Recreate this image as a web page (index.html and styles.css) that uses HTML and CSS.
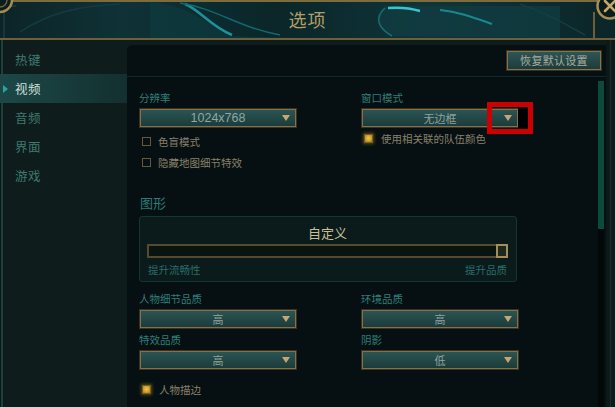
FILE: index.html
```html
<!DOCTYPE html>
<html lang="zh-CN">
<head>
<meta charset="utf-8">
<title>选项</title>
<link rel="stylesheet" href="styles.css">
</head>
<body>
<div class="window">
  <header class="titlebar">
    <svg class="swirl" viewBox="0 0 615 36" preserveAspectRatio="none" aria-hidden="true">
      <defs>
        <linearGradient id="bg" x1="0" y1="0" x2="1" y2="0">
          <stop offset="0" stop-color="#0c2427"/>
          <stop offset="0.2" stop-color="#0f3236"/>
          <stop offset="0.45" stop-color="#0a2629"/>
          <stop offset="0.7" stop-color="#0f3539"/>
          <stop offset="1" stop-color="#0b2528"/>
        </linearGradient>
      </defs>
      <rect width="615" height="36" fill="url(#bg)"/>
      <path d="M150 0 C 190 4 205 20 230 34 L 300 36 L 150 36 Z" fill="#0e3a3f" opacity="0.7"/>
      <path d="M385 4 C 372 14 378 26 392 34 L 560 36 L 560 4 Z" fill="#103c41" opacity="0.8"/>
      <path d="M185 2 C 200 8 210 24 232 33" stroke="#1fa3ab" stroke-width="2.5" fill="none" opacity="0.85"/>
      <path d="M180 1 C 215 6 240 26 280 33" stroke="#13676d" stroke-width="1.5" fill="none"/>
      <path d="M388 6 C 400 5 410 6 420 9" stroke="#37c6cf" stroke-width="2.5" fill="none"/>
      <path d="M440 8 C 460 10 475 16 492 22" stroke="#1e9aa2" stroke-width="2" fill="none" opacity="0.8"/>
      <path d="M385 6 C 374 16 378 26 392 34" stroke="#1a6c72" stroke-width="1.5" fill="none"/>
      <path d="M20 30 C 50 10 80 4 120 2" stroke="#143c40" stroke-width="1.5" fill="none"/>
      <path d="M520 2 C 545 10 565 22 585 33" stroke="#143e42" stroke-width="1.5" fill="none"/>
      <path d="M4 36 L 4 12 C 6 6 10 4 16 4" stroke="#1d4b4c" stroke-width="1" fill="none"/>
      <path d="M594 10 L 594 36" stroke="#6e5f36" stroke-width="2" fill="none"/>
    </svg>
    <svg class="corner-left" viewBox="0 0 20 20" aria-hidden="true">
      <circle cx="2" cy="2" r="12" fill="#0b1d1e" stroke="#a58d52" stroke-width="2.5"/>
      <circle cx="2" cy="2" r="7" fill="none" stroke="#6f5e35" stroke-width="1.5"/>
    </svg>
    <svg class="close" viewBox="0 0 30 30" aria-hidden="true">
      <circle cx="15" cy="11" r="12.5" fill="#0b1a1b" stroke="#a68e54" stroke-width="2.5"/>
      <path d="M10 6 L 20 16 M20 6 L 10 16" stroke="#c3a869" stroke-width="2.6" stroke-linecap="round"/>
    </svg>
    <h1 class="title">选项</h1>
  </header>

  <div class="main">
    <nav class="sidebar">
      <div class="nav-item">热键</div>
      <div class="nav-item active">视频</div>
      <div class="nav-item">音频</div>
      <div class="nav-item">界面</div>
      <div class="nav-item">游戏</div>
    </nav>

    <section class="panel">
      <div class="panel-top">
        <button class="btn">恢复默认设置</button>
      </div>
      <div class="scroll">
        <div class="content">
          <div class="grid">
            <div class="col">
              <div class="label">分辨率</div>
              <div class="select"><span></span><span class="value latin">1024x768</span><svg class="arrow" viewBox="0 0 8 6"><polygon points="0,0 8,0 4,6"/></svg></div>
              <div class="check"><span class="box"></span><span>色盲模式</span></div>
              <div class="check"><span class="box"></span><span>隐藏地图细节特效</span></div>
            </div>
            <div class="col">
              <div class="label">窗口模式</div>
              <div class="select-wrap">
                <div class="select"><span></span><span class="value">无边框</span><svg class="arrow" viewBox="0 0 8 6"><polygon points="0,0 8,0 4,6"/></svg></div>
                <div class="highlight"></div>
              </div>
              <div class="check"><span class="box on"></span><span>使用相关联的队伍颜色</span></div>
            </div>
          </div>

          <h2 class="section-title">图形</h2>
          <div class="gfx">
            <div class="gfx-name">自定义</div>
            <div class="track"><div class="knob"></div></div>
            <div class="gfx-ends"><span>提升流畅性</span><span>提升品质</span></div>
          </div>

          <div class="grid grid-quality">
            <div class="field">
              <div class="label">人物细节品质</div>
              <div class="select"><span></span><span class="value">高</span><svg class="arrow" viewBox="0 0 8 6"><polygon points="0,0 8,0 4,6"/></svg></div>
            </div>
            <div class="field">
              <div class="label">环境品质</div>
              <div class="select"><span></span><span class="value">高</span><svg class="arrow" viewBox="0 0 8 6"><polygon points="0,0 8,0 4,6"/></svg></div>
            </div>
            <div class="field">
              <div class="label">特效品质</div>
              <div class="select"><span></span><span class="value">高</span><svg class="arrow" viewBox="0 0 8 6"><polygon points="0,0 8,0 4,6"/></svg></div>
            </div>
            <div class="field">
              <div class="label">阴影</div>
              <div class="select"><span></span><span class="value">低</span><svg class="arrow" viewBox="0 0 8 6"><polygon points="0,0 8,0 4,6"/></svg></div>
            </div>
          </div>

          <div class="check check-last"><span class="box on"></span><span>人物描边</span></div>
        </div>
        <div class="scrollbar"><div class="thumb"></div></div>
      </div>
    </section>

    <div class="frame-right"></div>
  </div>
</div>
</body>
</html>
```

FILE: styles.css
```css
* { box-sizing: border-box; }

html, body {
  margin: 0;
  padding: 0;
  background: #0f1c1c;
}

body {
  font-family: "Noto Sans CJK SC", "Noto Sans", sans-serif;
  width: 615px;
  height: 407px;
  overflow: hidden;
}

.window {
  width: 615px;
  height: 407px;
  display: flex;
  flex-direction: column;
}

/* ---------- title bar ---------- */
.titlebar {
  position: relative;
  height: 40px;
  flex: none;
  border-top: 2px solid #7f6c3e;
  border-bottom: 2px solid #6f6037;
  background: #0c2427;
  display: flex;
  align-items: center;
  justify-content: center;
}

.swirl {
  position: absolute;
  left: 0;
  top: 0;
  width: 615px;
  height: 36px;
}

.corner-left {
  position: absolute;
  left: -2px;
  top: -4px;
  width: 20px;
  height: 20px;
}

.close {
  position: absolute;
  left: 595px;
  top: -7px;
  width: 30px;
  height: 30px;
}

.title {
  position: relative;
  margin: 0 0 2px 0;
  font-size: 18px;
  font-weight: normal;
  line-height: 22px;
  letter-spacing: 1px;
  color: #b39d63;
}

/* ---------- main ---------- */
.main {
  flex: 1;
  display: flex;
  min-height: 0;
}

.sidebar {
  width: 127px;
  flex: none;
  padding-top: 5px;
  background: linear-gradient(90deg, #0b1616 0, #0b1616 1px, #1c403c 1px, #1c403c 3px, #0f1c1c 3px);
}

.nav-item {
  position: relative;
  height: 29px;
  line-height: 29px;
  padding-left: 15px;
  font-size: 12.5px;
  letter-spacing: 0.5px;
  color: #3d7a71;
}

.nav-item.active {
  color: #cfe0da;
  background: linear-gradient(90deg, #1d4747 0%, #173b3a 55%, #12302f 100%);
}

.nav-item.active::before {
  content: "";
  position: absolute;
  left: 3px;
  top: 11px;
  border-left: 5px solid #2aa39d;
  border-top: 4px solid transparent;
  border-bottom: 4px solid transparent;
}

/* ---------- panel ---------- */
.panel {
  width: 479px;
  flex: none;
  margin-top: 5px;
  background: #061012;
  border-top-left-radius: 5px;
  display: flex;
  flex-direction: column;
  min-height: 0;
}

.panel-top {
  height: 32px;
  flex: none;
  display: flex;
  justify-content: flex-end;
  align-items: flex-start;
  padding: 5px 4px 0 0;
  border-bottom: 1px solid #0f2a29;
}

.btn {
  width: 96px;
  height: 21px;
  padding: 0;
  border: 1px solid #3b3120;
  box-shadow: inset 0 0 0 1px #85724b;
  background: linear-gradient(#2e5755, #1c3a39);
  color: #aaad9f;
  font-family: "Noto Sans CJK SC", sans-serif;
  font-size: 11px;
  line-height: 19px;
  letter-spacing: 0.3px;
}

.scroll {
  flex: 1;
  display: flex;
  min-height: 0;
}

.content {
  flex: 1;
  padding: 14px 0 0 12px;
}

.scrollbar {
  width: 6px;
  flex: none;
  margin: 4px 2px 0 0;
  background: #020707;
}

.thumb {
  height: 148px;
  background: #0c4a3c;
}

.frame-right {
  flex: 1;
  background: linear-gradient(90deg, #0c1818 0, #0e1b1b 4px, #1b302e 4px, #1b302e 5px, #0e1b1b 5px);
}

/* ---------- form ---------- */
.grid {
  display: grid;
  grid-template-columns: 158px 158px;
  column-gap: 64px;
}

.label {
  height: 14px;
  line-height: 14px;
  margin-bottom: 3px;
  font-size: 10.5px;
  color: #2e7f7a;
  white-space: nowrap;
}

.select-wrap {
  position: relative;
}

.select {
  height: 20px;
  display: grid;
  grid-template-columns: 1fr auto 1fr;
  align-items: center;
  border: 1px solid #3d3220;
  box-shadow: inset 0 0 0 1px #84704a;
  background: linear-gradient(#2b5654, #1b3a39);
}

.value {
  font-size: 11px;
  line-height: 18px;
  color: #8ea39e;
}

.value.latin {
  font-family: "Liberation Sans", sans-serif;
  font-size: 12.5px;
  color: #8ea7a2;
}

.arrow {
  justify-self: end;
  width: 8px;
  height: 6px;
  margin-right: 6px;
  fill: #c9a572;
}

.highlight {
  position: absolute;
  left: 126px;
  top: -6px;
  width: 46px;
  height: 32px;
  border: 5px solid #cc0000;
}

.highlight::after {
  content: "";
  position: absolute;
  right: 0;
  top: 1px;
  bottom: 1px;
  width: 10px;
  background: #000;
}

.check {
  height: 21px;
  display: flex;
  align-items: center;
  gap: 7px;
  padding-left: 3px;
  font-size: 10.5px;
  color: #8a806a;
  white-space: nowrap;
}

.check:first-of-type { margin-top: 3px; }

.col .select + .check { margin-top: 3px; }

.box {
  width: 9px;
  height: 9px;
  flex: none;
  border: 1px solid #675a3c;
}

.box.on {
  border-color: #7a5c1c;
  background: radial-gradient(circle at 50% 45%, #f0c850 0, #d4a634 50%, #9a7220 100%);
  box-shadow: 0 0 3px 1px rgba(160, 120, 30, 0.55);
}

.box.on + span { margin-left: 1px; }

.section-title {
  margin: 22px 0 5px 1px;
  font-size: 13px;
  font-weight: normal;
  line-height: 16px;
  color: #2d7a75;
}

.gfx {
  width: 378px;
  padding: 8px 8px 5px 7px;
  border: 1px solid #133633;
  border-radius: 3px;
  background: #0b1a1b;
}

.gfx-name {
  height: 16px;
  line-height: 16px;
  text-align: center;
  font-size: 13px;
  color: #cabe93;
}

.track {
  height: 14px;
  margin-top: 3px;
  display: flex;
  justify-content: flex-end;
  border: 2px solid #554a2f;
  background: #09130f;
}

.knob {
  width: 12px;
  margin: -2px -2px -2px 0;
  border: 2px solid #a38e5a;
  background: #1e281d;
}

.gfx-ends {
  height: 13px;
  margin-top: 5px;
  display: flex;
  justify-content: space-between;
  font-size: 10.5px;
  line-height: 13px;
  color: #2a6d69;
  padding: 0 1px;
}

.grid-quality {
  margin-top: 10px;
  row-gap: 4px;
}

.check-last {
  margin-top: 9px;
}
```
